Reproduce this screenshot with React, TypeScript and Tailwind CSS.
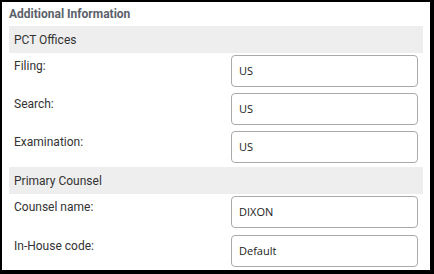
import React from 'react'

function Section({ title }: { title: string }) {
  return (
    <div className="h-[27px] bg-[#eeeeee] flex items-center pl-[5px] text-[12px] text-[#333333]">
      {title}
    </div>
  )
}

function Field({ label, value }: { label: string; value: string }) {
  return (
    <div className="grid grid-cols-[222px_187px] items-start">
      <div className="pt-[3px] pl-[5px] text-[12px] leading-[16px] text-[#333333]">{label}</div>
      <div className="h-[32px] border border-[#aaaaaa] rounded-[4px] bg-white flex items-center pl-[7px] text-[11px] text-[#222222] font-['Open_Sans',sans-serif]">
        {value}
      </div>
    </div>
  )
}

export default function App() {
  return (
    <div className="w-[434px] h-[274px] bg-black pt-[2px] pl-[2px] pr-[4px] pb-[4px] font-['Roboto',sans-serif]">
      <div className="h-full bg-white pl-[7px]">
        <div className="h-[24px] flex items-center text-[12px] font-bold text-[#5b616b]">
          Additional Information
        </div>
        <div className="w-[414px]">
          <Section title="PCT Offices" />
          <div className="flex flex-col gap-[6px] pt-[2px] pb-[4px]">
            <Field label="Filing:" value="US" />
            <Field label="Search:" value="US" />
            <Field label="Examination:" value="US" />
          </div>
          <Section title="Primary Counsel" />
          <div className="flex flex-col gap-[7px] pt-[2px]">
            <Field label="Counsel name:" value="DIXON" />
            <Field label="In-House code:" value="Default" />
          </div>
        </div>
      </div>
    </div>
  )
}
